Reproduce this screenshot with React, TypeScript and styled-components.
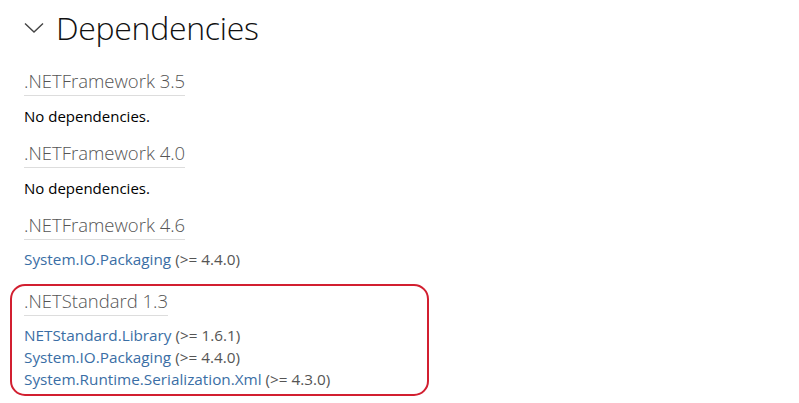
import styled, { createGlobalStyle } from 'styled-components';

const GlobalStyle = createGlobalStyle`
  html, body {
    margin: 0;
    padding: 0;
    background: #fff;
  }
  body {
    font-family: 'Open Sans', 'Noto Sans', sans-serif;
    color: #000;
  }
`;

type Dep = { name: string; version: string };
type Group = { framework: string; deps: Dep[]; highlighted?: boolean };

const groups: Group[] = [
  { framework: '.NETFramework 3.5', deps: [] },
  { framework: '.NETFramework 4.0', deps: [] },
  {
    framework: '.NETFramework 4.6',
    deps: [{ name: 'System.IO.Packaging', version: '(>= 4.4.0)' }],
  },
  {
    framework: '.NETStandard 1.3',
    highlighted: true,
    deps: [
      { name: 'NETStandard.Library', version: '(>= 1.6.1)' },
      { name: 'System.IO.Packaging', version: '(>= 4.4.0)' },
      { name: 'System.Runtime.Serialization.Xml', version: '(>= 4.3.0)' },
    ],
  },
];

const Chevron = () => (
  <svg width="20" height="12" viewBox="0 0 20 12" fill="none">
    <path d="M1 1.5 L10 10 L19 1.5" stroke="#444" strokeWidth="1.4" />
  </svg>
);

export default function App() {
  return (
    <>
      <GlobalStyle />
      <Page>
        <Header>
          <Chevron />
          <Heading>Dependencies</Heading>
        </Header>
        {groups.map((g) => (
          <Section key={g.framework} $highlighted={g.highlighted}>
            <FrameworkTitle>{g.framework}</FrameworkTitle>
            {g.deps.length === 0 ? (
              <Empty>No dependencies.</Empty>
            ) : (
              <DepList>
                {g.deps.map((d) => (
                  <DepItem key={d.name}>
                    <DepLink href="#">{d.name}</DepLink> {d.version}
                  </DepItem>
                ))}
              </DepList>
            )}
          </Section>
        ))}
      </Page>
    </>
  );
}

const Page = styled.div`
  padding: 0 0 0 24px;
  width: 799px;
  height: 403px;
  box-sizing: border-box;
  overflow: hidden;
`;

const Header = styled.div`
  display: flex;
  align-items: center;
  gap: 12px;
  height: 54px;
  svg {
    margin-top: 2px;
  }
`;

const Heading = styled.h2`
  margin: 0;
  font-size: 32px;
  font-weight: 300;
  color: #111;
  letter-spacing: -0.3px;
`;

const Section = styled.div<{ $highlighted?: boolean }>`
  margin-top: 14px;
  ${({ $highlighted }) =>
    $highlighted &&
    `
    margin: 14px 0 0 -14px;
    width: 391px;
    padding: 2px 12px 4px 12px;
    border: 2.5px solid #d21f30;
    border-radius: 15px;
  `}
`;

const FrameworkTitle = styled.h4`
  display: inline-block;
  margin: 0;
  padding-bottom: 1px;
  font-size: 18.5px;
  font-weight: 300;
  line-height: 26px;
  color: #555;
  border-bottom: 1px solid #ddd;
`;

const Empty = styled.p`
  margin: 10px 0 0;
  font-size: 15px;
  line-height: 20px;
`;

const DepList = styled.ul`
  list-style: none;
  margin: 8px 0 0;
  padding: 0;
`;

const DepItem = styled.li`
  font-size: 15.3px;
  line-height: 22px;
  color: #555;
`;

const DepLink = styled.a`
  color: #3a6ea5;
  text-decoration: none;
`;
